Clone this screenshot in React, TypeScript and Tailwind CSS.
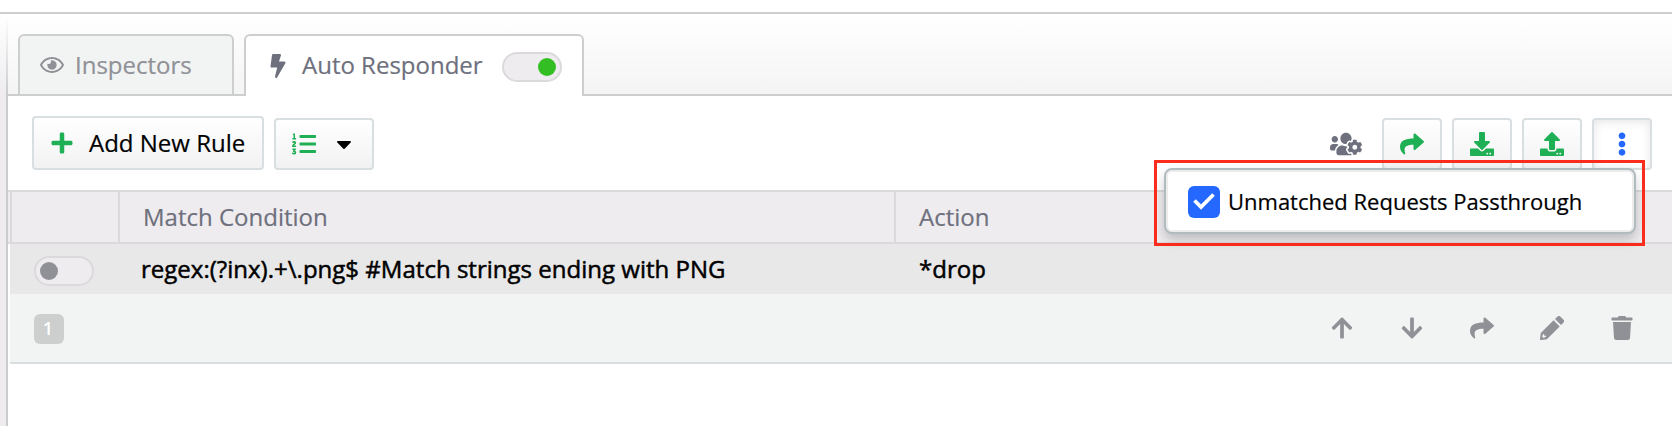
import type { ReactNode } from "react";
import {
  FaArrowDown,
  FaArrowUp,
  FaBolt,
  FaCaretDown,
  FaDownload,
  FaEllipsisV,
  FaListOl,
  FaPlus,
  FaRegEye,
  FaShare,
  FaTrash,
  FaUpload,
  FaUsersCog,
} from "react-icons/fa";

function PencilIcon({ className }: { className?: string }) {
  return (
    <svg viewBox="0 0 24 24" fill="currentColor" className={className}>
      <path d="M17.300 .7a2.250 2.250 0 0 1 3.200 0l2.800 2.800a2.250 2.250 0 0 1 0 3.200L21 9l-6-6z" />
      <path
        d="M13.600 4.300l6.100 6.100L6.900 23.200 1.200 24A1.100 1.100 0 0 1 0 22.800l.8-5.700zM3.400 17.900L2.500 19.400 2.300 21.100 3 21.700 4.700 21.500 6.200 20.600V19.800H4.200V17.900z"
        fillRule="evenodd"
      />
    </svg>
  );
}

const ROW_ACTIONS = [FaArrowUp, FaArrowDown, FaShare, PencilIcon, FaTrash];

function Toggle({ on }: { on: boolean }) {
  return (
    <span
      className={`mt-0.5 flex h-[30px] w-[60px] shrink-0 items-center rounded-full border-2 border-[#dbd9dc] bg-[#eeecef] px-1 ${on ? "justify-end" : "justify-start"}`}
    >
      <span className={`size-[18px] rounded-full ${on ? "bg-[#33bf24]" : "bg-[#909197]"}`} />
    </span>
  );
}

function ToolButton({ children, active = false }: { children: ReactNode; active?: boolean }) {
  return (
    <button
      className={`flex h-[52px] w-[60px] items-center justify-center rounded-[4px] border-2 border-[#d9dee1] ${
        active ? "bg-white text-[#2468ff] shadow-[inset_0_2px_10px_#e6e6e6]" : "bg-linear-to-b from-white to-[#f2f2f2] text-[#1faf54]"
      }`}
    >
      {children}
    </button>
  );
}

export default function App() {
  return (
    <div className="h-[426px] w-[1672px] overflow-hidden bg-white pt-3 font-['Open_Sans','Noto_Sans',sans-serif] text-[24px] leading-8 text-black">
      <div className="flex h-[414px] border-t-2 border-[#cdcece]">
        <div className="w-1.5 shrink-0 bg-linear-to-b from-white to-[#eeecef] to-[82px]" />
        <div className="w-0.5 shrink-0 bg-linear-to-b from-white to-[#cacbcc] to-[82px]" />
        <div className="relative flex min-w-0 flex-1 flex-col">
          <nav className="flex h-[82px] shrink-0 items-end bg-linear-to-b from-white to-[#f4f4f4]">
            <div className="h-full w-2.5 border-b-2 border-[#cdcece]" />
            <div className="flex h-[62px] w-[216px] items-center rounded-t-[6px] border-2 border-[#cdcece] bg-[#f2f4f3] pl-5 text-[#909197]">
              <FaRegEye className="size-6 shrink-0" />
              <span className="ml-[11px] [-webkit-text-stroke:0.2px_#909197]">Inspectors</span>
            </div>
            <div className="h-full w-2.5 border-b-2 border-[#cdcece]" />
            <div className="flex h-[62px] w-[340px] items-center rounded-t-[6px] border-2 border-b-0 border-[#cdcece] bg-white pl-5 text-[#6e707d]">
              <FaBolt className="size-6 shrink-0" />
              <span className="-mt-0.5 ml-3 w-[200px] whitespace-nowrap [-webkit-text-stroke:0.2px_#6e707d]">Auto Responder</span>
              <Toggle on />
            </div>
            <div className="h-full flex-1 border-b-2 border-[#cdcece]" />
          </nav>

          <div className="flex h-[94px] shrink-0 items-end pb-5 pl-6 pr-5">
            <button className="flex h-[54px] w-[232px] items-center rounded-[4px] border-2 border-[#d9dee1] bg-linear-to-b from-white to-[#f2f2f2] pl-4">
              <FaPlus className="size-6 text-[#1faf54]" />
              <span className="ml-[15px] whitespace-nowrap [-webkit-text-stroke:0.2px_black]">Add New Rule</span>
            </button>
            <button className="ml-2.5 flex h-[52px] w-[100px] items-center rounded-[4px] border-2 border-[#d9dee1] bg-linear-to-b from-white to-[#f2f2f2] pl-4">
              <FaListOl className="size-6 text-[#1faf54]" />
              <FaCaretDown className="ml-4 size-6" />
            </button>
            <div className="ml-auto flex items-center gap-2.5">
              <FaUsersCog className="mr-2.5 size-8 text-[#6e707d]" />
              <ToolButton>
                <FaShare className="size-6" />
              </ToolButton>
              <ToolButton>
                <FaDownload className="size-6" />
              </ToolButton>
              <ToolButton>
                <FaUpload className="size-6" />
              </ToolButton>
              <ToolButton active>
                <FaEllipsisV className="size-6" />
              </ToolButton>
            </div>
          </div>

          <div className="flex h-[54px] shrink-0 border-y-2 border-[#dbd9dc] bg-[#eeecef] pl-0.5 text-[#6e707d] [-webkit-text-stroke:0.2px_#6e707d]">
            <div className="w-[110px] border-x-2 border-[#dbd9dc]" />
            <div className="flex w-[776px] items-center border-r-2 border-[#dbd9dc] pl-[23px]">Match Condition</div>
            <div className="flex items-center pl-[23px]">Action</div>
          </div>

          <div className="ml-0.5 flex h-[50px] shrink-0 items-center bg-[#e8e8e8] pl-6 [-webkit-text-stroke:0.5px_black]">
            <span className="mt-0.5 flex">
              <Toggle on={false} />
            </span>
            <span className="ml-[47px] w-[778px] tracking-[0.015px]">regex:(?inx).+\.png$ #Match strings ending with PNG</span>
            <span>*drop</span>
          </div>

          <div className="ml-0.5 flex h-[70px] shrink-0 items-center border-b-2 border-[#d9dee1] bg-[#f2f4f3] pl-6 pr-5 text-[#909197]">
            <span className="mt-0.5 flex size-[30px] items-center justify-center rounded-[6px] bg-[#cdcece] pb-0.5 pr-0.5 text-[18px] font-semibold leading-none text-white">
              1
            </span>
            <div className="ml-auto flex gap-2.5">
              {ROW_ACTIONS.map((Icon, i) => (
                <span key={i} className="flex w-[60px] items-center justify-center">
                  <Icon className="size-6" />
                </span>
              ))}
            </div>
          </div>

          <div className="absolute left-[1156px] top-[154px] flex h-[66px] w-[472px] items-center rounded-[8px] border-2 border-[#b0bbbe] bg-white pl-[22px] text-[22px] shadow-[inset_0_0_0_2px_#ececec,0_6px_12px_rgba(0,0,0,0.2)]">
            <span className="mt-0.5 flex size-8 items-center justify-center rounded-[6px] bg-[#2468ff]">
              <svg width="24" height="20" viewBox="0 0 24 20" fill="none" stroke="white" strokeWidth="3.800" className="-mt-0.5">
                <path d="M2.500 9.500L9 16 21.500 3.500" />
              </svg>
            </span>
            <span className="ml-2 whitespace-nowrap [-webkit-text-stroke:0.2px_black]">Unmatched Requests Passthrough</span>
          </div>
          <div className="absolute left-[1146px] top-[146px] h-[86px] w-[491px] border-3 border-[#fb2c1c]" />
        </div>
      </div>
    </div>
  );
}
